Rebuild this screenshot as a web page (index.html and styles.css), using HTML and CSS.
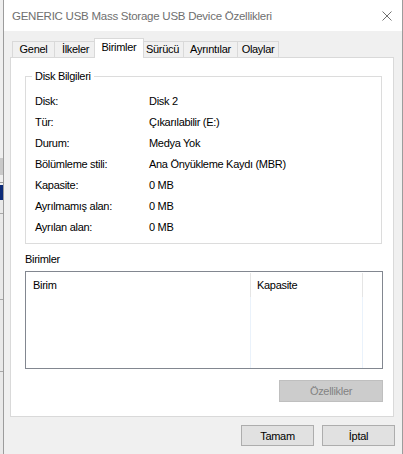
FILE: index.html
```html
<!DOCTYPE html>
<html lang="tr">
<head>
<meta charset="utf-8">
<title>GENERIC USB Mass Storage USB Device Özellikleri</title>
<link rel="stylesheet" href="styles.css">
</head>
<body>
<div class="window">
  <div class="titlebar">
    <span class="title">GENERIC USB Mass Storage USB Device Özellikleri</span>
    <svg class="close" width="10" height="10" viewBox="0 0 10 10"><path d="M0.5 0.5 L9.5 9.5 M9.5 0.5 L0.5 9.5" stroke="#707070" stroke-width="1" fill="none"/></svg>
  </div>
  <div class="tabs">
    <div class="tab t-genel">Genel</div>
    <div class="tab t-ilkeler">İlkeler</div>
    <div class="tab active">Birimler</div>
    <div class="tab t-surucu">Sürücü</div>
    <div class="tab t-ayrinti">Ayrıntılar</div>
    <div class="tab t-olay">Olaylar</div>
  </div>
  <div class="panel">
    <div class="group">
      <div class="legend">Disk Bilgileri</div>
      <div class="info">
        <div class="k">Disk:</div><div class="v">Disk 2</div>
        <div class="k">Tür:</div><div class="v">Çıkarılabilir (E:)</div>
        <div class="k">Durum:</div><div class="v">Medya Yok</div>
        <div class="k">Bölümleme stili:</div><div class="v">Ana Önyükleme Kaydı (MBR)</div>
        <div class="k">Kapasite:</div><div class="v">0 MB</div>
        <div class="k">Ayrılmamış alan:</div><div class="v">0 MB</div>
        <div class="k">Ayrılan alan:</div><div class="v">0 MB</div>
      </div>
    </div>
    <div class="section-label">Birimler</div>
    <div class="list">
      <div class="col c1"><div class="head">Birim</div><div class="body"></div></div>
      <div class="col c2"><div class="head">Kapasite</div><div class="body"></div></div>
      <div class="col c3"><div class="head"></div><div class="body"></div></div>
    </div>
    <div class="actions"><button class="btn wide" disabled>Özellikler</button></div>
  </div>
  <div class="buttons">
    <button class="btn">Tamam</button>
    <button class="btn">İptal</button>
  </div>
</div>
</body>
</html>
```
FILE: styles.css
```css
html, body {
  margin: 0;
  padding: 0;
}
body {
  width: 403px;
  height: 454px;
  overflow: hidden;
  font-family: "Liberation Sans", Arial, sans-serif;
  font-size: 11px;
  color: #000;
  background:
    linear-gradient(to bottom,
      #efefef 0 158px,
      #c9c9c9 158px 175px,
      #efefef 175px 182px,
      #9a9a9a 182px 183px,
      #efefef 183px 185px,
      #0b2a78 185px 200px,
      #e9e9e9 200px 213px,
      #a8a8a8 213px 214px,
      #e9e9e9 214px 299px,
      #a8a8a8 299px 300px,
      #e9e9e9 300px 371px,
      #a8a8a8 371px 372px,
      #e9e9e9 372px 454px);
}
.window {
  margin-left: 3px;
  width: 400px;
  height: 454px;
  box-sizing: border-box;
  border-left: 1px solid #9c9c9c;
  border-right: 1px solid #9c9c9c;
  background: #f0f0f0;
  display: flex;
  flex-direction: column;
}
.titlebar {
  height: 31px;
  background: #fff;
  display: flex;
  align-items: center;
  padding-left: 8px;
  padding-right: 10px;
  flex: none;
}
.title {
  flex: 1;
  font-size: 11.5px;
  color: #6f6f6f;
  letter-spacing: -0.25px;
  padding-top: 1px;
}
.close {
  display: block;
}
.tabs {
  height: 26px;
  padding-left: 8px;
  display: flex;
  align-items: flex-end;
  flex: none;
}
.tab {
  box-sizing: border-box;
  height: 16px;
  border: 1px solid #d9d9d9;
  border-bottom: none;
  background: #f0f0f0;
  margin-left: -1px;
  text-align: center;
  line-height: 15px;
  white-space: nowrap;
  letter-spacing: -0.3px;
}
.t-genel { width: 43px; margin-left: 0; }
.t-ilkeler { width: 43px; }
.tab.active {
  width: 50px;
  height: 20px;
  margin-left: -3px;
  margin-right: -2px;
  margin-bottom: -1px;
  background: #fff;
  position: relative;
  z-index: 1;
  line-height: 17px;
}
.t-surucu { width: 43px; }
.t-ayrinti { width: 55px; }
.t-olay { width: 42px; }
.panel {
  box-sizing: border-box;
  width: 384px;
  height: 360px;
  margin-left: 6px;
  border: 1px solid #d9d9d9;
  background: #fff;
  flex: none;
  padding: 18px 0 0 14px;
}
.group {
  box-sizing: border-box;
  width: 357px;
  height: 168px;
  border: 1px solid #dcdcdc;
  position: relative;
  padding: 13px 0 0 9px;
}
.legend {
  position: absolute;
  left: 6px;
  top: -8px;
  background: #fff;
  padding: 0 3px;
  line-height: 14px;
  letter-spacing: -0.3px;
}
.info {
  display: grid;
  grid-template-columns: 114px 1fr;
  grid-auto-rows: 21px;
  align-items: center;
  letter-spacing: -0.3px;
}
.section-label {
  margin-top: 9px;
  height: 13px;
  line-height: 13px;
  letter-spacing: -0.3px;
}
.list {
  box-sizing: border-box;
  margin-top: 5px;
  width: 358px;
  height: 98px;
  border: 1px solid #828790;
  display: flex;
  padding-top: 1px;
}
.col {
  display: flex;
  flex-direction: column;
}
.c1 { width: 225px; }
.c2 { width: 112px; }
.c3 { flex: 1; }
.head {
  height: 24px;
  line-height: 24px;
  padding-left: 7px;
  border-right: 1px solid #e5e5e5;
  letter-spacing: -0.3px;
}
.body {
  flex: 1;
  border-right: 1px solid #eaf2fb;
}
.c2 .head { padding-left: 6px; }
.c3 .head, .c3 .body { border-right: none; }
.actions {
  display: flex;
  justify-content: flex-end;
  width: 358px;
  margin-top: 11px;
}
.btn {
  box-sizing: border-box;
  font-family: "Liberation Sans", Arial, sans-serif;
  font-size: 11px;
  letter-spacing: -0.3px;
  width: 73px;
  height: 21px;
  padding: 0;
  border: 1px solid #adadad;
  background: #e1e1e1;
  color: #000;
  border-radius: 0;
}
.btn.wide {
  width: 104px;
  height: 22px;
  background: #cccccc;
  border-color: #bfbfbf;
  color: #838383;
}
.buttons {
  display: flex;
  justify-content: flex-end;
  gap: 8px;
  margin-top: 8px;
  padding-right: 7px;
}
```
